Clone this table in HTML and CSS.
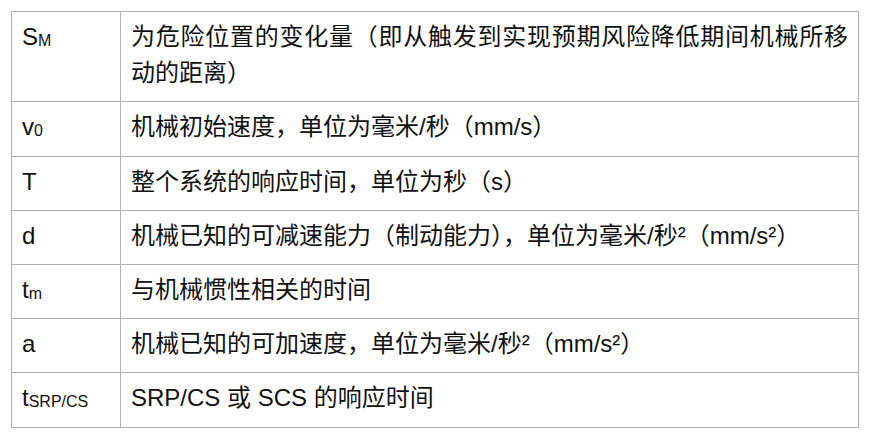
FILE: index.html
```html
<!DOCTYPE html>
<html lang="zh-CN">
<head>
<meta charset="utf-8">
<title>参数说明</title>
<link rel="stylesheet" href="styles.css">
</head>
<body>
<div class="page">
  <table class="params">
    <colgroup><col class="c-sym"><col class="c-desc"></colgroup>
    <tbody>
      <tr><td class="sym">S<span class="sub">M</span></td><td class="desc">为危险位置的变化量（即从触发到实现预期风险降低期间机械所移动的距离）</td></tr>
      <tr><td class="sym">v<span class="sub">0</span></td><td class="desc">机械初始速度，单位为毫米/秒（mm/s）</td></tr>
      <tr><td class="sym">T</td><td class="desc">整个系统的响应时间，单位为秒（s）</td></tr>
      <tr><td class="sym">d</td><td class="desc">机械已知的可减速能力（制动能力），单位为毫米/秒²（mm/s²）</td></tr>
      <tr><td class="sym">t<span class="sub">m</span></td><td class="desc">与机械惯性相关的时间</td></tr>
      <tr><td class="sym">a</td><td class="desc">机械已知的可加速度，单位为毫米/秒²（mm/s²）</td></tr>
      <tr><td class="sym">t<span class="sub">SRP/CS</span></td><td class="desc">SRP/CS 或 SCS 的响应时间</td></tr>
    </tbody>
  </table>
</div>
</body>
</html>
```
FILE: styles.css
```css
html, body {
  margin: 0;
  padding: 0;
  background: #ffffff;
}

.page {
  padding: 11px 0 0 11px;
}

.params {
  border-collapse: collapse;
  table-layout: fixed;
  width: 848px;
  font-family: "Liberation Sans", "Noto Sans CJK SC", sans-serif;
  font-size: 24px;
  line-height: 36.2px;
  color: #111111;
}

.c-sym {
  width: 109px;
}

.params td {
  border: 1px solid #b0b0b0;
  padding: 7px 10px 10px 10px;
  vertical-align: top;
  text-align: left;
}

.params td.desc {
  text-align: justify;
}

.sub {
  font-size: 16px;
  line-height: 1;
  vertical-align: -1px;
}
```
